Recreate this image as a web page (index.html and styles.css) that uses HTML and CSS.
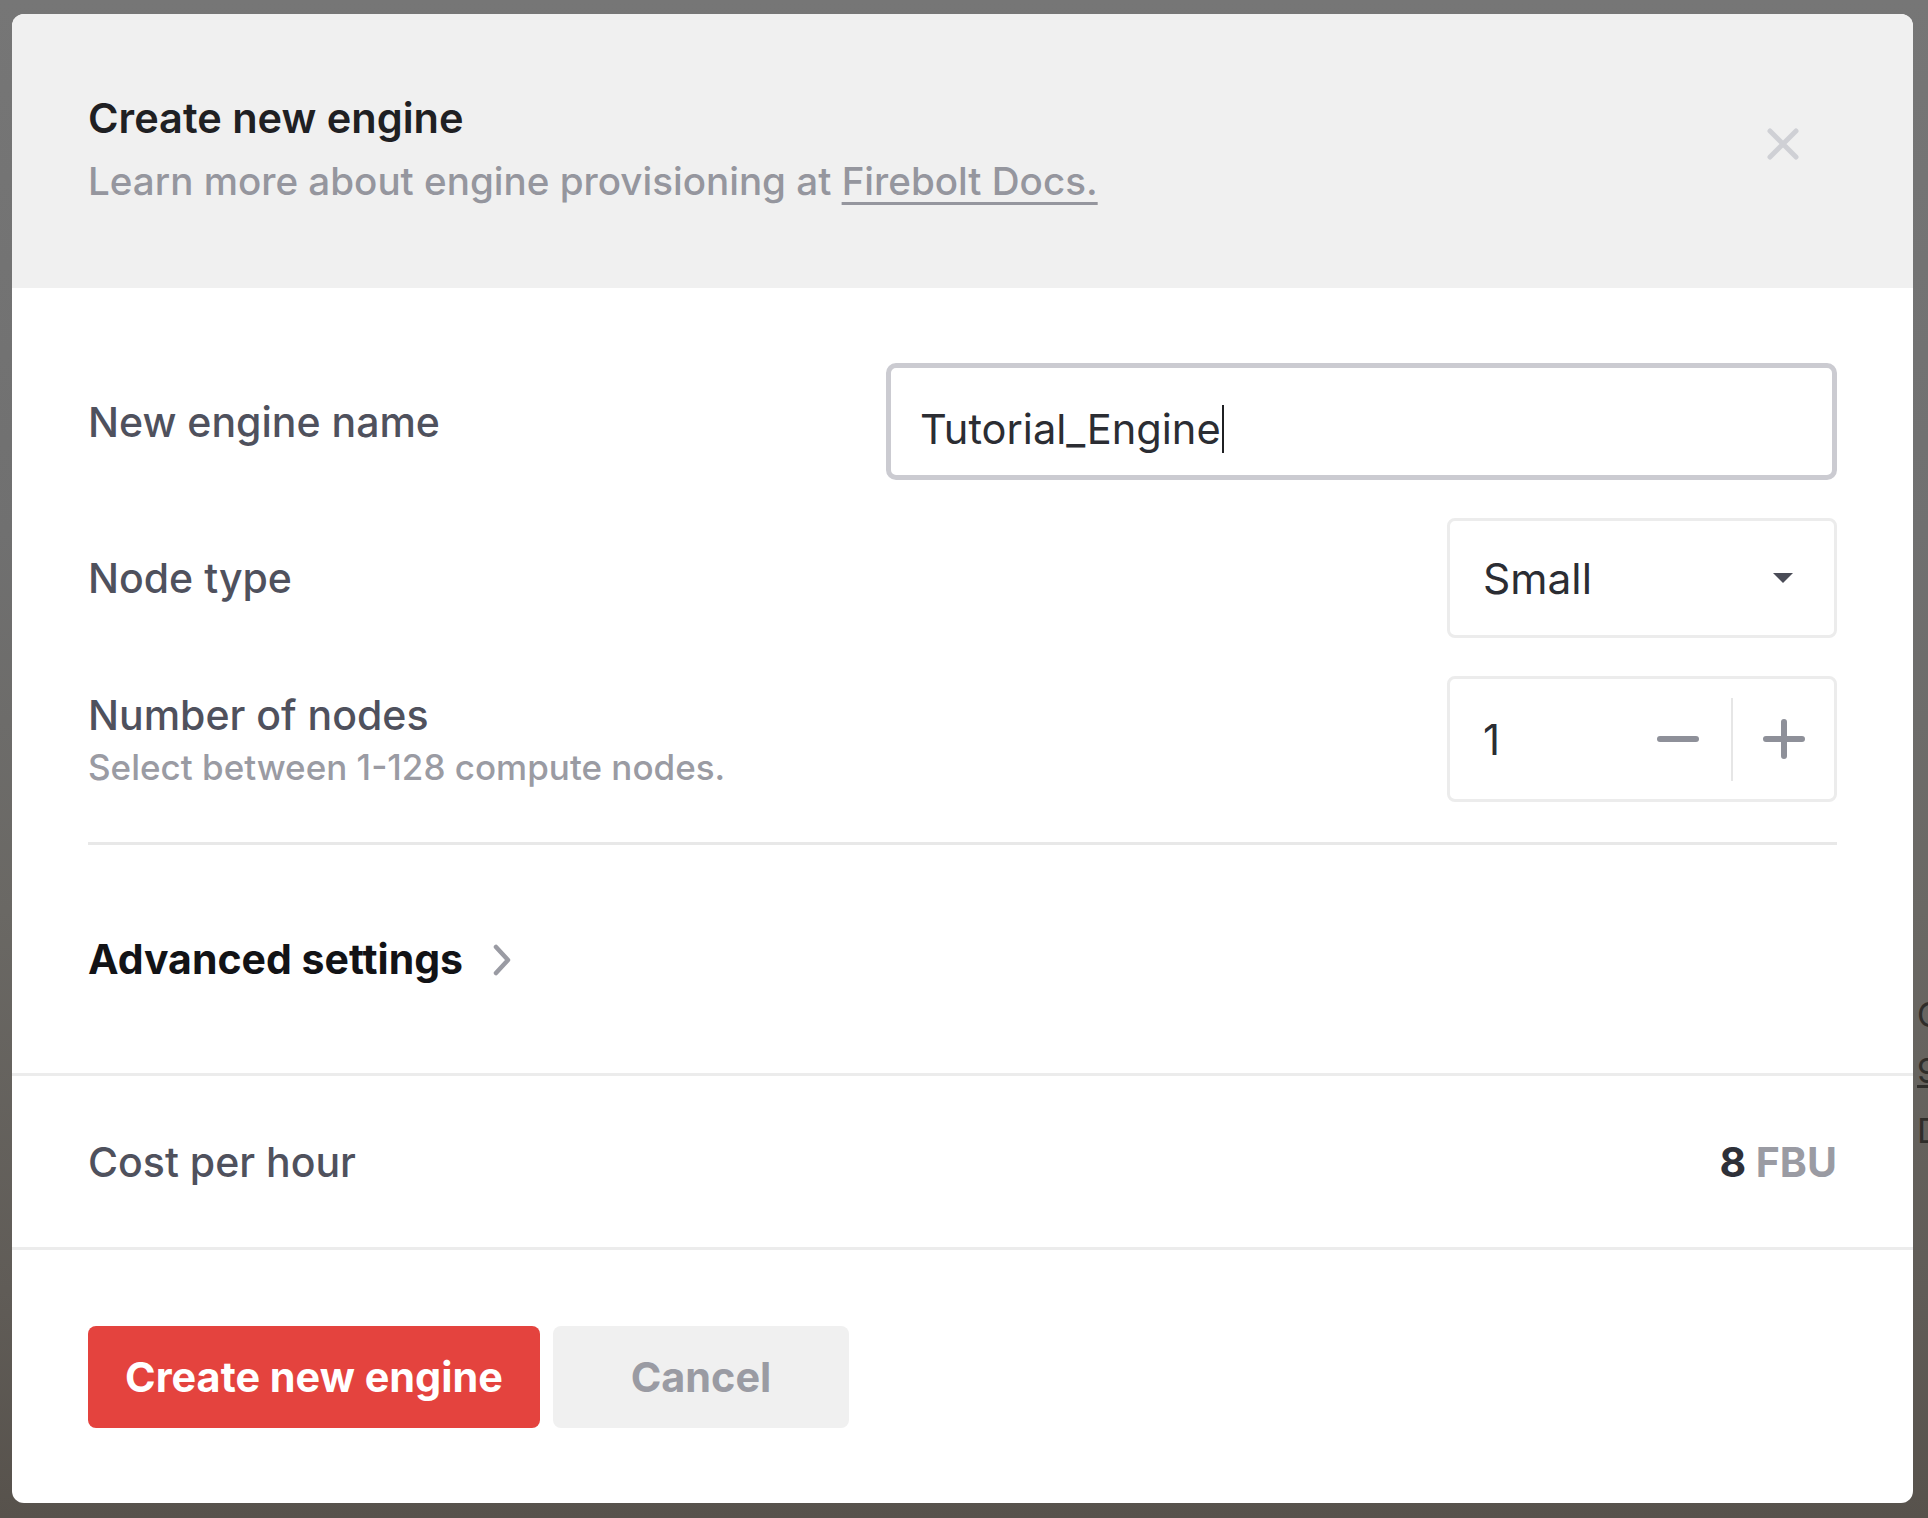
FILE: index.html
```html
<!DOCTYPE html>
<html lang="en">
<head>
<meta charset="utf-8">
<title>Create new engine</title>
<link rel="stylesheet" href="styles.css">
</head>
<body>
<div class="page-peek">
  <span class="peek-c">C</span>
  <span class="peek-9">9</span>
  <span class="peek-d">D</span>
</div>
<div class="modal">
  <header class="modal-header">
    <div class="titles">
      <h1 class="title">Create new engine</h1>
      <p class="subtitle">Learn more about engine provisioning at <a class="docs-link" href="#">Firebolt Docs.</a></p>
    </div>
    <button class="close-btn" aria-label="Close">
      <svg width="32" height="32" viewBox="0 0 32 32"><path d="M3 3 L29 29 M29 3 L3 29" stroke="#cfd0d5" stroke-width="5" stroke-linecap="round" fill="none"/></svg>
    </button>
  </header>

  <section class="modal-body">
    <div class="form">
      <div class="row">
        <div class="label">New engine name</div>
        <div class="text-input">Tutorial_Engine<span class="caret"></span></div>
      </div>
      <div class="row">
        <div class="label">Node type</div>
        <div class="select">
          <span class="select-value">Small</span>
          <svg class="select-arrow" width="20" height="10" viewBox="0 0 20 10"><path d="M0 0 L20 0 L10 10 Z" fill="#4a4c57"/></svg>
        </div>
      </div>
      <div class="row">
        <div class="label-group">
          <div class="label">Number of nodes</div>
          <div class="hint">Select between 1-128 compute nodes.</div>
        </div>
        <div class="stepper">
          <span class="stepper-value">1</span>
          <button class="step-btn step-minus" aria-label="Decrease">
            <svg width="44" height="10" viewBox="0 0 44 10"><path d="M4 5 L40 5" stroke="#8e9099" stroke-width="6" stroke-linecap="round"/></svg>
          </button>
          <span class="step-divider"></span>
          <button class="step-btn step-plus" aria-label="Increase">
            <svg width="44" height="42" viewBox="0 0 44 42"><path d="M4 21 L40 21 M22 4 L22 38" stroke="#8e9099" stroke-width="6" stroke-linecap="round"/></svg>
          </button>
        </div>
      </div>
    </div>
    <div class="divider"></div>
    <div class="advanced">
      <span class="advanced-label">Advanced settings</span>
      <svg class="chevron" width="20" height="32" viewBox="0 0 20 32"><path d="M4 3 L16 16 L4 29" stroke="#9a9ba3" stroke-width="4.5" stroke-linecap="round" stroke-linejoin="round" fill="none"/></svg>
    </div>
  </section>

  <div class="cost-row">
    <span class="cost-label">Cost per hour</span>
    <span class="cost-value"><span class="cost-num">8</span> <span class="cost-unit">FBU</span></span>
  </div>

  <footer class="modal-footer">
    <button class="btn btn-primary">Create new engine</button>
    <button class="btn btn-secondary">Cancel</button>
  </footer>
</div>
</body>
</html>
```
FILE: styles.css
```css
* { box-sizing: border-box; }

html, body {
  margin: 0;
  padding: 0;
  width: 1928px;
  height: 1518px;
  overflow: hidden;
}

body {
  position: relative;
  font-family: "Inter", "Noto Sans", "Liberation Sans", sans-serif;
  background: linear-gradient(180deg, #767676 0%, #707070 35%, #6a6864 60%, #605c57 85%, #57524c 100%);
  padding-top: 14px;
  padding-left: 12px;
}

.page-peek {
  position: absolute;
  left: 1917px;
  top: 990px;
  font-family: "Inter", "Liberation Sans", sans-serif;
  font-size: 34px;
  color: #2f2d2a;
  line-height: 1;
}
.page-peek span { position: absolute; left: 0; }
.peek-c { top: 8px; }
.peek-9 { top: 64px; text-decoration: underline; }
.peek-d { top: 124px; }

.modal {
  width: 1901px;
  height: 1489px;
  background: #ffffff;
  border-radius: 12px;
  overflow: hidden;
  display: flex;
  flex-direction: column;
}

.modal-header {
  background: #f0f0f0;
  height: 274px;
  padding: 80px 114px 0 76px;
  display: flex;
  justify-content: space-between;
  align-items: flex-start;
}

.title {
  margin: 0;
  font-size: 41.5px;
  line-height: 48px;
  font-weight: 600;
  color: #1f2023;
}

.subtitle {
  margin: 15px 0 0;
  font-size: 38.6px;
  line-height: 48px;
  font-weight: 500;
  color: #95969e;
}

.docs-link {
  color: #95969e;
  text-decoration: underline;
  text-decoration-thickness: 3px;
  text-underline-offset: 7px;
}

.close-btn {
  margin-top: 34px;
  padding: 0;
  border: 0;
  background: transparent;
  width: 32px;
  height: 32px;
  display: block;
}
.close-btn svg { display: block; }

.modal-body {
  padding: 75px 76px 0 76px;
  display: flex;
  flex-direction: column;
}

.form {
  display: flex;
  flex-direction: column;
  gap: 38px;
}

.row {
  display: flex;
  justify-content: space-between;
  align-items: center;
}

.label {
  font-size: 41px;
  line-height: 48px;
  font-weight: 500;
  color: #4f515d;
}

.label-group {
  display: flex;
  flex-direction: column;
}

.hint {
  margin-top: 8px;
  font-size: 35px;
  line-height: 40px;
  font-weight: 500;
  color: #9a9ba3;
}

.text-input {
  width: 951px;
  height: 117px;
  border: 5px solid #cbcbd1;
  border-radius: 10px;
  padding-left: 29px;
  padding-top: 14px;
  display: flex;
  align-items: center;
  font-size: 41.6px;
  font-weight: 400;
  color: #2b2d33;
  background: #fff;
}

.caret {
  display: inline-block;
  width: 2px;
  height: 48px;
  background: #1f2023;
  margin-left: 1px;
}

.select {
  width: 390px;
  height: 120px;
  border: 3px solid #ececec;
  border-radius: 8px;
  padding: 0 41px 0 33px;
  display: flex;
  align-items: center;
  justify-content: space-between;
  background: #fff;
}

.select-value {
  font-size: 42.5px;
  font-weight: 400;
  color: #2b2d33;
}
.select-arrow { display: block; }

.stepper {
  width: 390px;
  height: 126px;
  border: 3px solid #ececec;
  border-radius: 8px;
  padding-left: 33px;
  display: flex;
  align-items: center;
  background: #fff;
}

.stepper-value {
  flex: 1;
  font-size: 42px;
  font-weight: 400;
  color: #2b2d33;
}

.step-btn {
  border: 0;
  background: transparent;
  padding: 0;
  height: 100%;
  display: flex;
  align-items: center;
  justify-content: center;
}
.step-minus { width: 107px; }
.step-plus { width: 101px; }
.step-btn svg { display: block; }

.step-divider {
  width: 2px;
  height: 83px;
  background: #e6e6e6;
}

.divider {
  margin-top: 40px;
  height: 3px;
  background: #e8e8e8;
}

.advanced {
  height: 228px;
  display: flex;
  align-items: center;
  gap: 29px;
}

.advanced-label {
  font-size: 41px;
  line-height: 48px;
  font-weight: 700;
  color: #121316;
}
.chevron { display: block; margin-top: 2px; }

.cost-row {
  border-top: 3px solid #ececec;
  height: 174px;
  padding: 0 76px 0 76px;
  display: flex;
  justify-content: space-between;
  align-items: center;
}

.cost-label {
  font-size: 41px;
  line-height: 48px;
  font-weight: 500;
  color: #4f515d;
}

.cost-value {
  font-size: 41px;
  line-height: 48px;
  font-weight: 700;
}
.cost-num { color: #2e3038; }
.cost-unit { color: #9a9ba3; }

.modal-footer {
  border-top: 3px solid #ececec;
  flex: 1;
  padding: 0 76px;
  display: flex;
  align-items: center;
  gap: 13px;
}

.btn {
  height: 102px;
  border: 0;
  border-radius: 8px;
  font-family: "Inter", "Noto Sans", "Liberation Sans", sans-serif;
  font-size: 41.4px;
  font-weight: 700;
  cursor: pointer;
}

.btn-primary {
  width: 452px;
  background: #e4433e;
  color: #ffffff;
}

.btn-secondary {
  width: 296px;
  background: #f0f0f0;
  color: #9a9ba3;
}
```
